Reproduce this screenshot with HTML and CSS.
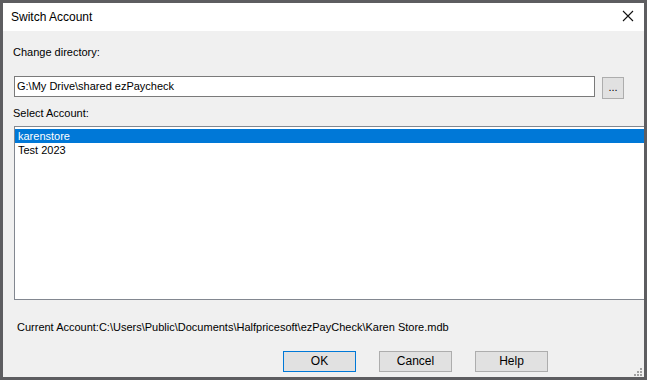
FILE: index.html
```html
<!DOCTYPE html>
<html lang="en">

<head>
    <meta charset="UTF-8">
    <title>Switch Account</title>
    <link rel="stylesheet" href="styles.css">
</head>

<body>
    <div class="window">
        <!-- title bar -->
        <div class="title-bar">
            <span class="title">Switch Account</span>
            <span class="close-btn">
                <svg width="12" height="12" viewBox="0 0 12 12">
                    <path d="M1 1 L11 11 M11 1 L1 11" stroke="#111" stroke-width="1.1" fill="none" />
                </svg>
            </span>
        </div>

        <!-- dialog body -->
        <div class="dialog-body">
            <div class="label label-dir">Change directory:</div>
            <div class="dir-row">
                <div class="text-input">G:\My Drive\shared ezPaycheck</div>
                <div class="browse-btn">...</div>
            </div>

            <div class="label label-select">Select Account:</div>
            <div class="list-box">
                <div class="list-item selected">karenstore</div>
                <div class="list-item">Test 2023</div>
            </div>

            <div class="current-account">Current Account:C:\Users\Public\Documents\Halfpricesoft\ezPayCheck\Karen Store.mdb</div>

            <div class="button-row">
                <div class="btn btn-default">OK</div>
                <div class="btn">Cancel</div>
                <div class="btn">Help</div>
            </div>

            <div class="size-grip">
                <svg width="8" height="8" viewBox="0 0 8 8" fill="#a0a0a0">
                    <rect x="6" y="0" width="2" height="2" />
                    <rect x="3" y="3" width="2" height="2" />
                    <rect x="6" y="3" width="2" height="2" />
                    <rect x="0" y="6" width="2" height="2" />
                    <rect x="3" y="6" width="2" height="2" />
                    <rect x="6" y="6" width="2" height="2" />
                </svg>
            </div>
        </div>
    </div>
</body>

</html>
```

FILE: styles.css
```css
/* whole page: the dark frame around the dialog */
body {
    margin: 0;
    width: 647px;
    height: 380px;
    background-color: #5d5d60;
    font-family: "Liberation Sans", Arial, sans-serif;
    font-size: 11px;
    color: #000;
    overflow: hidden;
}

.window {
    display: flex;
    flex-direction: column;
    margin: 3px 3px 0 3px;
    height: 374px;
    overflow: hidden;
}

/* title bar */
.title-bar {
    display: flex;
    align-items: center;
    justify-content: space-between;
    height: 28px;
    background-color: #fff;
}

.title {
    font-size: 12px;
    margin-left: 8px;
    margin-top: -1px;
}

.close-btn {
    display: flex;
    margin-right: 10px;
    margin-top: -2px;
}

/* dialog body */
.dialog-body {
    position: relative;
    flex: 1;
    display: flex;
    flex-direction: column;
    background-color: #f0f0f0;
    padding-left: 10px;
}

.label {
    line-height: 14px;
}

.label-dir {
    margin-top: 14px;
}

.dir-row {
    display: flex;
    align-items: flex-start;
    margin-top: 17px;
    margin-left: 1px;
}

.text-input {
    width: 577px;
    height: 19px;
    line-height: 19px;
    padding-left: 2px;
    background-color: #fff;
    border: 1px solid #7a7a7a;
}

.browse-btn {
    width: 20px;
    height: 20px;
    margin-left: 7px;
    margin-top: 1px;
    background-color: #e1e1e1;
    border: 1px solid #adadad;
    text-align: center;
    line-height: 18px;
    font-size: 11px;
}

.label-select {
    margin-top: 7px;
}

/* account list */
.list-box {
    margin-top: 6px;
    margin-left: 1px;
    margin-right: -4px;
    height: 170px;
    padding-top: 2px;
    background-color: #fff;
    border: 1px solid #828790;
}

.list-item {
    height: 14px;
    line-height: 14px;
    padding-left: 3px;
}

.list-item.selected {
    background-color: #0078d7;
    color: #fff;
}

.current-account {
    margin-top: 20px;
    margin-left: 4px;
    line-height: 14px;
}

/* bottom buttons */
.button-row {
    display: flex;
    gap: 23px;
    margin-top: 17px;
    margin-left: 270px;
}

.btn {
    width: 71px;
    height: 19px;
    line-height: 19px;
    text-align: center;
    background-color: #e1e1e1;
    border: 1px solid #adadad;
    font-size: 12px;
}

.btn-default {
    border-color: #0078d7;
}

.size-grip {
    position: absolute;
    right: 2px;
    bottom: 1px;
    display: flex;
}
```
